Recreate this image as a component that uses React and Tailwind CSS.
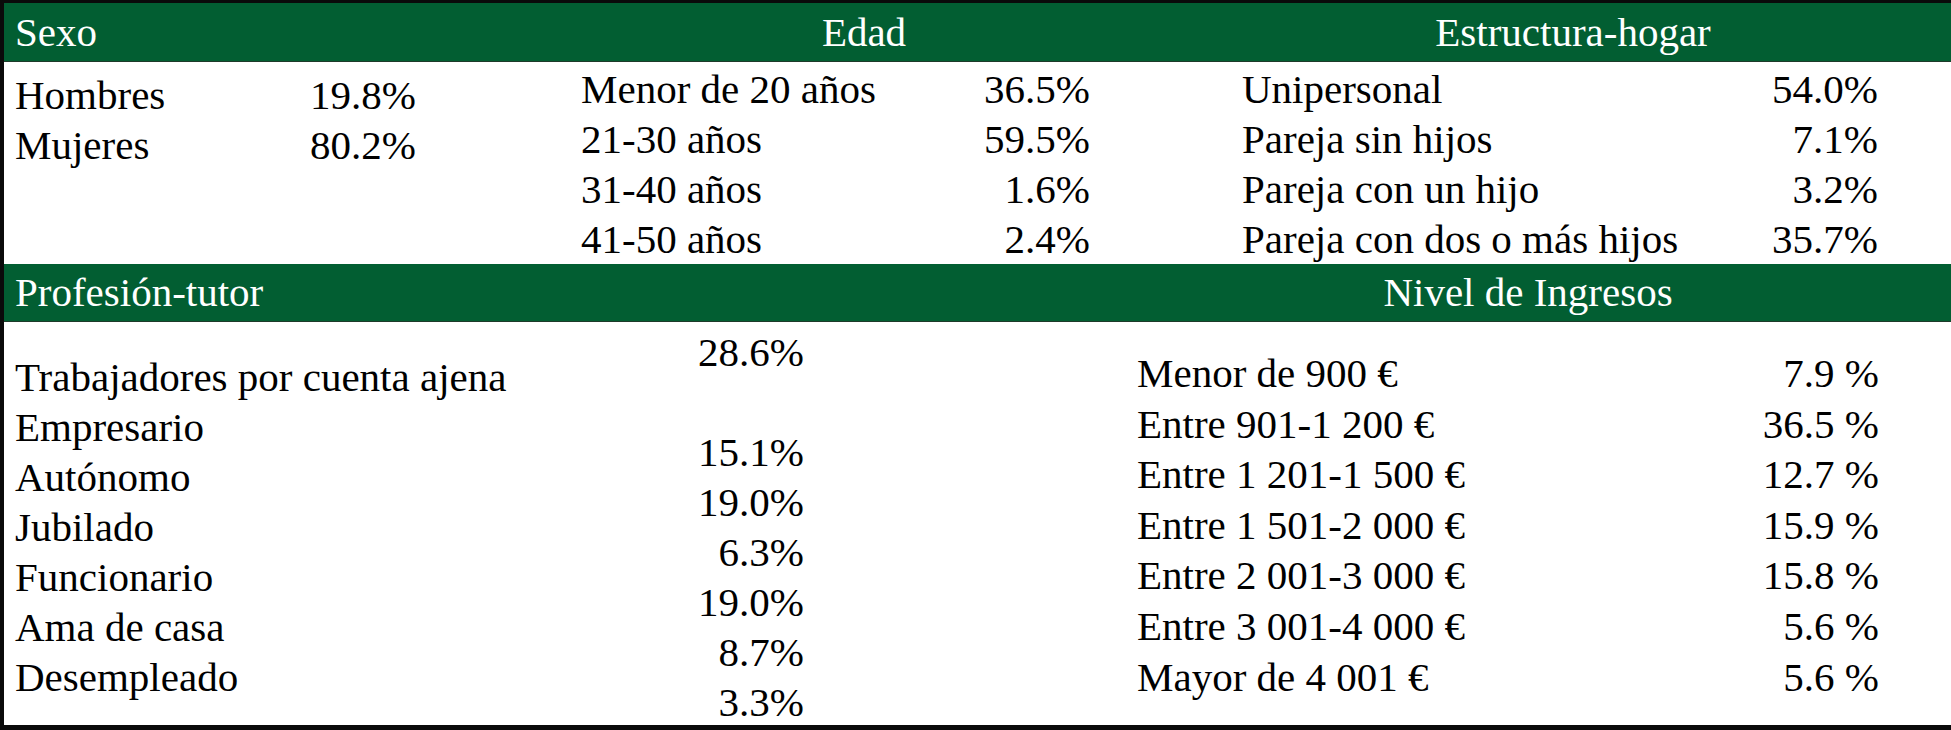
import React from 'react';

const sexo = [
  ['Hombres', '19.8%'],
  ['Mujeres', '80.2%'],
];

const edad = [
  ['Menor de 20 años', '36.5%'],
  ['21-30 años', '59.5%'],
  ['31-40 años', '1.6%'],
  ['41-50 años', '2.4%'],
];

const hogar = [
  ['Unipersonal', '54.0%'],
  ['Pareja sin hijos', '7.1%'],
  ['Pareja con un hijo', '3.2%'],
  ['Pareja con dos o más hijos', '35.7%'],
];

const profesion = [
  'Trabajadores por cuenta ajena',
  'Empresario',
  'Autónomo',
  'Jubilado',
  'Funcionario',
  'Ama de casa',
  'Desempleado',
];

// the values column sits half a row higher, with an empty slot after the first
const profesionValues = ['28.6%', '', '15.1%', '19.0%', '6.3%', '19.0%', '8.7%', '3.3%'];

const ingresos = [
  ['Menor de 900 €', '7.9 %'],
  ['Entre 901-1 200 €', '36.5 %'],
  ['Entre 1 201-1 500 €', '12.7 %'],
  ['Entre 1 501-2 000 €', '15.9 %'],
  ['Entre 2 001-3 000 €', '15.8 %'],
  ['Entre 3 001-4 000 €', '5.6 %'],
  ['Mayor de 4 001 €', '5.6 %'],
];

function Row({ label, value, rowClass = 'leading-[50px]' }) {
  return (
    <div className={`flex justify-between whitespace-nowrap ${rowClass}`}>
      <span>{label}</span>
      <span>{value}</span>
    </div>
  );
}

function App() {
  return (
    <div className="w-[1951px] h-[730px] bg-white text-black text-[41px] font-['Liberation_Serif','Times_New_Roman',serif] overflow-hidden border-l-[4px] border-t-[3px] border-b-[5px] border-[#0a0a0a] flex flex-col">
      {/* header 1 */}
      <div className="h-[59px] shrink-0 bg-[#025e32] text-white flex items-center leading-none border-b border-[#1e3a2a]">
        <div className="w-[556px] pl-[11px]">Sexo</div>
        <div className="w-[608px] text-center">Edad</div>
        <div className="flex-1 pl-[27px] text-center">Estructura-hogar</div>
      </div>

      {/* top body */}
      <div className="h-[202px] shrink-0 flex">
        <div className="w-[577px] pl-[11px] pt-[8px]">
          {sexo.map(([l, v]) => (
            <div key={l} className="flex leading-[50px]">
              <span className="w-[295px]">{l}</span>
              <span>{v}</span>
            </div>
          ))}
        </div>
        <div className="w-[509px] pt-[2px]">
          {edad.map(([l, v]) => (
            <Row key={l} label={l} value={v} />
          ))}
        </div>
        <div className="w-[636px] ml-[152px] pt-[2px]">
          {hogar.map(([l, v]) => (
            <Row key={l} label={l} value={v} />
          ))}
        </div>
      </div>

      {/* header 2 */}
      <div className="h-[58px] shrink-0 bg-[#025e32] text-white flex items-center leading-none border-b border-[#1e3a2a]">
        <div className="w-[800px] pl-[11px]">Profesión-tutor</div>
        <div className="flex-1 pl-[301px] text-center">Nivel de Ingresos</div>
      </div>

      {/* bottom body */}
      <div className="flex-1 flex">
        <div className="w-[800px] pl-[11px] flex justify-between">
          <div className="pt-[30px]">
            {profesion.map((l) => (
              <div key={l} className="leading-[50px] whitespace-nowrap">{l}</div>
            ))}
          </div>
          <div className="pt-[5px] text-right">
            {profesionValues.map((v, i) => (
              <div key={i} className="leading-[50px] h-[50px]">{v}</div>
            ))}
          </div>
        </div>
        <div className="w-[742px] ml-[333px] pt-[26px]">
          {ingresos.map(([l, v]) => (
            <Row key={l} label={l} value={v} rowClass="leading-[50.6px]" />
          ))}
        </div>
      </div>
    </div>
  );
}

export default App;
